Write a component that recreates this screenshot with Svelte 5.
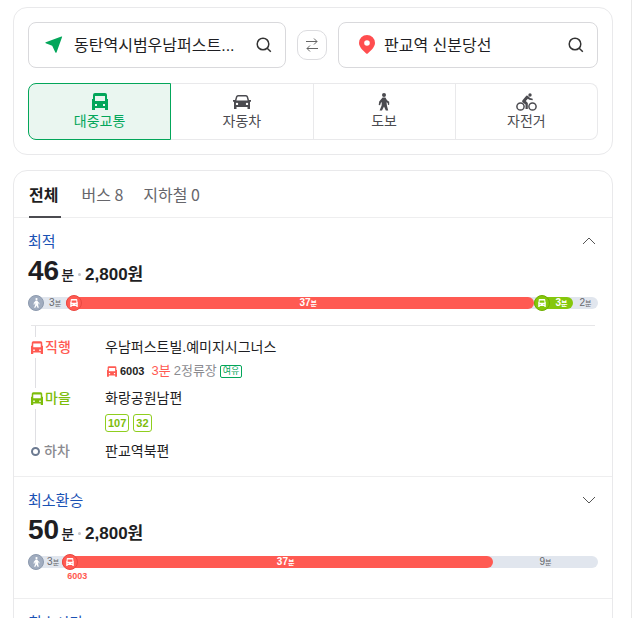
<script>
  let from = $state("동탄역시범우남퍼스트...");
  let to = $state("판교역 신분당선");
  let mode = $state("transit");
  let tab = $state("전체");
  let opened = $state(0);

  const modes = [
    { id: "transit", name: "대중교통" },
    { id: "car", name: "자동차" },
    { id: "walk", name: "도보" },
    { id: "bike", name: "자전거" },
  ];

  const tabs = [
    { name: "전체" },
    { name: "버스", count: 8 },
    { name: "지하철", count: 0 },
  ];

  // share is the part of the bar's width, in percent
  const routes = [
    {
      title: "최적",
      time: 46,
      price: "2,800",
      parts: [
        { kind: "walk", min: 3, share: 6.7, icon: true },
        { kind: "red", min: 37, share: 82.1, icon: true },
        { kind: "green", min: 3, share: 6.8, icon: true },
        { kind: "walk", min: 2, share: 4.4 },
      ],
      steps: [
        {
          kind: "red",
          label: "직행",
          stop: "우남퍼스트빌.예미지시그너스",
          bus: { no: "6003", wait: "3분", left: "2정류장", state: "여유" },
        },
        { kind: "green", label: "마을", stop: "화랑공원남편", lines: [107, 32] },
        { kind: "end", label: "하차", stop: "판교역북편" },
      ],
    },
    {
      title: "최소환승",
      time: 50,
      price: "2,800",
      parts: [
        { kind: "walk", min: 3, share: 6, icon: true },
        { kind: "red", min: 37, share: 75.6, icon: true, no: "6003" },
        { kind: "walk", min: 9, share: 18.4 },
      ],
    },
    {
      title: "최소시간",
      time: 46,
      price: "2,800",
      parts: [
        { kind: "walk", min: 3, share: 6.7, icon: true },
        { kind: "red", min: 37, share: 82.1, icon: true },
        { kind: "walk", min: 6, share: 11.2 },
      ],
    },
  ];
</script>

{#snippet busIcon()}
  <svg class="icon-bus" viewBox="0 0 16 17" aria-hidden="true">
    <path
      fill="currentColor"
      fill-rule="evenodd"
      d="M3 0h10q2 0 2 2v4h1v11h-3v-2H3v2H0V6h1V2q0-2 2-2zM3 3v5h10V3zM3 11v2h2v-2zM11 11v2h2v-2z"
    />
  </svg>
{/snippet}

{#snippet walkIcon()}
  <svg class="icon-walk" viewBox="0 0 12 18" aria-hidden="true">
    <circle cx="6" cy="2" r="2" fill="currentColor" />
    <path
      fill="currentColor"
      d="M4.6 4.5h2.8L9 7.2l2.2 1.6v3l-1.2.1-.3-2-1.2-.7.4 3.2 1.3 5.2H7.8L6 13.4 4 17.6H1.6l2-5.1.2-3.6-1 1-.7 2.4-1.4-.2.5-3.6z"
    />
  </svg>
{/snippet}

{#snippet searchIcon()}
  <svg width="16" height="16" viewBox="0 0 16 16" fill="none" stroke="#333" stroke-width="1.5" aria-hidden="true">
    <circle cx="7" cy="7" r="5.8" />
    <path d="M11.2 11.2l3.6 3.6" />
  </svg>
{/snippet}

<main class="panel">
  <section class="card search">
    <div class="places">
      <div class="field">
        <svg width="18" height="18" viewBox="0 0 18 18" aria-hidden="true">
          <path fill="#03a65a" d="M17 1.3q.5-1-.6-.8L.8 6.3q-.9.5 0 1l6.4 2.5 3.2 6.6q.6.9 1.1 0z" />
        </svg>
        <input bind:value={from} aria-label="출발지" />
        <button class="find" aria-label="출발지 검색">{@render searchIcon()}</button>
      </div>
      <button class="swap" aria-label="출발지와 도착지 바꾸기">
        <svg width="12" height="14" viewBox="0 0 12 14" fill="none" stroke="#666" aria-hidden="true">
          <path d="M0 3.5h11M8 .5l3 3-3 3M12 10.500H1M4 7.500l-3 3 3 3" />
        </svg>
      </button>
      <div class="field">
        <svg width="18" height="20" viewBox="-1 0 18 20" aria-hidden="true">
          <path
            fill="#ff4d4f"
            fill-rule="evenodd"
            d="M9 0a8 8 0 0 1 8 8C17 12.500 11.500 17 9 19 6.500 17 1 12.500 1 8A8 8 0 0 1 9 0zM9 5.200a2.800 2.800 0 1 0 0 5.600 2.800 2.800 0 0 0 0-5.600z"
          />
        </svg>
        <input bind:value={to} aria-label="도착지" />
        <button class="find" aria-label="도착지 검색">{@render searchIcon()}</button>
      </div>
    </div>

    <div class="modes">
      {#each modes as m}
        <button class="mode" class:on={mode === m.id} onclick={() => (mode = m.id)}>
          <span class="mode-icon">
            {#if m.id === "transit"}
              {@render busIcon()}
            {:else if m.id === "car"}
              <svg width="18" height="16" viewBox="0 0 18 16" aria-hidden="true">
                <path
                  fill="currentColor"
                  fill-rule="evenodd"
                  d="M5 1h8q1.500 0 2 1.500L16 6h2v1.500l-1 .5v7h-2.500v-2h-11v2H1V8L0 7.500V6h2l1-3.500Q3.500 1 5 1zM5.300 2.400q-.8 0-1 .8L3.400 6.500h11.200l-.9-3.300q-.2-.8-1-.8zM4 8.700a1.200 1.200 0 1 0 0 2.400 1.200 1.200 0 0 0 0-2.400zM14 8.700a1.200 1.200 0 1 0 0 2.400 1.200 1.200 0 0 0 0-2.400z"
                />
              </svg>
            {:else if m.id === "walk"}
              {@render walkIcon()}
            {:else}
              <svg width="21" height="18" viewBox="0 0 21 18" aria-hidden="true">
                <g fill="none" stroke="currentColor" stroke-width="1.500">
                  <circle cx="4.500" cy="13.500" r="3.600" />
                  <circle cx="16.500" cy="13.500" r="3.600" />
                </g>
                <circle cx="14" cy="2" r="1.700" fill="currentColor" />
                <path
                  fill="currentColor"
                  d="M10.300 2.700q1-.4 1.700.4l2 2 2.700.6v1.500l-3.400-.4-1.500-1-2 2.200 2 2V16H9.500v-4.500L6.500 9.300Q5.600 8.300 6.500 7.200z"
                />
              </svg>
            {/if}
          </span>
          {m.name}
        </button>
      {/each}
    </div>
  </section>

  <section class="card results">
    <nav class="tabs">
      {#each tabs as t}
        <button class="tab" class:on={tab === t.name} onclick={() => (tab = t.name)}>
          {t.name}
          {t.count}
        </button>
      {/each}
    </nav>

    {#each routes as route, i}
      <article class="route">
        <div class="top">
          <h2>{route.title}</h2>
          <button
            class="toggle"
            class:open={opened === i}
            aria-label="상세 경로"
            onclick={() => (opened = opened === i ? -1 : i)}
          >
            <svg width="14" height="8" viewBox="0 0 14 8" fill="none" stroke="#555" aria-hidden="true">
              <path d="M1 1l6 6 6-6" />
            </svg>
          </button>
        </div>
        <div class="sum">
          <strong>{route.time}</strong>
          <span class="unit">분</span>
          <span class="dot"></span>
          <span class="price">{route.price}원</span>
        </div>

        <div class="bar">
          {#each route.parts as part}
            <div class="part {part.kind}" style="width: {part.share}%">
              {#if part.icon}
                <span class="round">
                  {#if part.kind === "walk"}
                    {@render walkIcon()}
                  {:else}
                    {@render busIcon()}
                  {/if}
                </span>
              {/if}
              <span class="min">{part.min}<small>분</small></span>
              {#if part.no}
                <span class="no">{part.no}</span>
              {/if}
            </div>
          {/each}
        </div>

        {#if opened === i && route.steps}
          <ol class="steps">
            {#each route.steps as step}
              <li class="step {step.kind}">
                <div class="label">
                  {#if step.kind === "end"}
                    <span class="ring"></span>
                  {:else}
                    <span class="label-icon">{@render busIcon()}</span>
                  {/if}
                  {step.label}
                </div>
                <div class="info">
                  <div class="stop">{step.stop}</div>
                  {#if step.bus}
                    <div class="bus">
                      {@render busIcon()}
                      <b>{step.bus.no}</b>
                      <span class="wait">{step.bus.wait}</span>
                      <span class="left">{step.bus.left}</span>
                      <span class="state">{step.bus.state}</span>
                    </div>
                  {/if}
                  {#if step.lines}
                    <div class="lines">
                      {#each step.lines as line}
                        <span class="line">{line}</span>
                      {/each}
                    </div>
                  {/if}
                </div>
              </li>
            {/each}
          </ol>
        {/if}
      </article>
    {/each}
  </section>
</main>

<style>
  :global(body) {
    background: #fff;
  }
  .panel {
    box-sizing: border-box;
    height: 100vh;
    overflow: hidden;
    margin-right: 7px;
    padding: 7px 18px 0 13px;
    border-right: 1px solid #e8e8e8;
    font-family: "Liberation Sans", "Noto Sans CJK KR", sans-serif;
    color: #1e1e23;
  }
  button,
  input {
    font: inherit;
    color: inherit;
    padding: 0;
    border: 0;
    background: none;
  }
  button {
    cursor: pointer;
  }
  svg {
    display: block;
    flex: none;
  }
  .card {
    border: 1px solid #e9e9eb;
    border-radius: 14px;
  }
  .search {
    padding: 14px;
    margin-bottom: 15px;
  }

  .places {
    display: flex;
    align-items: center;
    gap: 11px;
    margin-bottom: 15px;
  }
  .field {
    box-sizing: border-box;
    flex: 1;
    min-width: 0;
    height: 46px;
    display: flex;
    align-items: center;
    padding: 0 13px 0 16px;
    border: 1px solid #d9d9dc;
    border-radius: 8px;
  }
  .field input {
    flex: 1;
    min-width: 0;
    height: 24px;
    margin: 0 10px 0 11px;
    padding-bottom: 2px;
    font-size: 16px;
    outline: none;
  }
  .field + .swap + .field {
    padding-left: 18px;
  }
  .field + .swap + .field input {
    margin-left: 9px;
  }
  .swap {
    width: 30px;
    height: 30px;
    display: flex;
    align-items: center;
    justify-content: center;
    border: 1px solid #dcdcdf;
    border-radius: 10px;
  }

  .modes {
    display: flex;
  }
  .mode {
    box-sizing: border-box;
    flex: 1;
    height: 57px;
    display: flex;
    flex-direction: column;
    align-items: center;
    padding-top: 8px;
    border: 1px solid #e9e9eb;
    border-left-width: 0;
    font-size: 14px;
    line-height: 20px;
    color: #4b4b50;
  }
  .mode:first-child {
    border-left-width: 1px;
    border-radius: 8px 0 0 8px;
  }
  .mode:last-child {
    border-radius: 0 8px 8px 0;
  }
  .mode.on {
    border: 1px solid #03a65a;
    background: #eaf6f0;
    color: #03a65a;
  }
  .mode-icon {
    height: 19px;
    display: flex;
    align-items: center;
  }
  .icon-bus {
    width: 16px;
    height: 17px;
  }
  .icon-walk {
    width: 12px;
    height: 18px;
  }

  .tabs {
    display: flex;
    gap: 20px;
    height: 46px;
    padding: 0 15px;
    border-bottom: 1px solid #eeeeef;
  }
  .tab {
    height: 47px;
    border-bottom: 2px solid transparent;
    font-family: "Noto Sans CJK KR", sans-serif;
    font-size: 16px;
    color: #66666b;
  }
  .tab.on {
    padding-right: 3px;
    border-color: #4b4b50;
    font-weight: 700;
    color: #1e1e23;
  }

  .route {
    padding: 14px 14px 15px;
    border-bottom: 1px solid #eeeeef;
  }
  .top {
    display: flex;
    justify-content: space-between;
    align-items: center;
  }
  h2 {
    margin: 0;
    font-size: 15px;
    font-weight: 400;
    line-height: 20px;
    color: #1b52b4;
  }
  .toggle {
    padding: 1px 2px 3px;
  }
  .toggle.open svg {
    transform: rotate(180deg);
  }
  .sum {
    display: flex;
    align-items: baseline;
    height: 34px;
    margin: 2px 0 9px;
    line-height: 34px;
  }
  .sum strong {
    font-size: 28px;
  }
  .unit {
    margin-left: 2px;
    font-size: 14px;
    font-weight: 500;
  }
  .dot {
    width: 3px;
    height: 3px;
    margin: 0 4px;
    border-radius: 50%;
    background: #c4c4c8;
    align-self: center;
    position: relative;
    top: 3px;
  }
  .price {
    font-size: 17px;
    font-weight: 700;
  }

  .bar {
    display: flex;
    height: 12px;
    margin: 2px 0;
    border-radius: 6px;
    background: #e1e6ee;
  }
  .part {
    position: relative;
    display: flex;
    align-items: center;
    border-radius: 6px;
    color: #66666b;
  }
  .part.red {
    background: #ff5a52;
    color: #fff;
  }
  .part.green {
    background: #85c70c;
    color: #fff;
  }
  .round {
    box-sizing: border-box;
    flex: none;
    width: 16px;
    height: 16px;
    display: flex;
    align-items: center;
    justify-content: center;
    border: 1px solid #8d9aae;
    border-radius: 50%;
    background: #a0acbf;
    color: #fff;
  }
  .red .round {
    border-color: #ea4841;
    background: #ff5a52;
  }
  .green .round {
    border-color: #6fae00;
    background: #85c70c;
  }
  .round .icon-bus {
    width: 8px;
    height: 8px;
  }
  .round .icon-walk {
    width: 7px;
    height: 10px;
  }
  .min {
    flex: 1;
    text-align: center;
    font-size: 10px;
    line-height: 12px;
  }
  .min small {
    font-size: 7px;
  }
  .red .min,
  .green .min {
    font-weight: 700;
  }
  .no {
    position: absolute;
    top: 14px;
    left: 5px;
    font-size: 9px;
    line-height: 12px;
    font-weight: 700;
    color: #ff5a52;
  }
  .route:has(.no) {
    padding-bottom: 28px;
  }

  .steps {
    position: relative;
    list-style: none;
    display: flex;
    flex-direction: column;
    margin: 16px 3px 0;
    padding: 11px 0 0;
    border-top: 1px solid #e6e6e8;
  }
  .steps::before {
    content: "";
    position: absolute;
    top: 0;
    bottom: 16px;
    left: 4px;
    width: 1px;
    background: #dfdfe3;
  }
  .step {
    position: relative;
    display: flex;
    font-size: 14px;
    line-height: 20px;
  }
  .step + .step {
    margin-top: 7px;
  }
  .label {
    flex: none;
    width: 74px;
    height: 20px;
    display: flex;
    align-items: center;
    gap: 2px;
    font-weight: 500;
  }
  .label-icon {
    padding: 4px 0;
    background: #fff;
  }
  .label-icon .icon-bus {
    width: 12px;
    height: 13px;
  }
  .red .label,
  .bus {
    color: #ff5a52;
  }
  .green .label {
    color: #7dbd0b;
  }
  .end .label {
    gap: 4px;
    color: #8b8b90;
  }
  .ring {
    box-sizing: border-box;
    width: 9px;
    height: 9px;
    border: 2px solid #6c7a91;
    border-radius: 50%;
    background: #fff;
  }
  .bus {
    display: flex;
    align-items: center;
    margin-top: 4px;
    padding-left: 2px;
    font-size: 13px;
  }
  .bus .icon-bus {
    width: 10px;
    height: 11px;
  }
  .bus b {
    margin: 0 7px 0 3px;
    font-size: 11px;
    color: #1e1e23;
  }
  .left {
    margin: 0 3px;
    color: #8b8b90;
  }
  .state {
    padding: 0 2px;
    border: 1px solid #03a65a;
    border-radius: 2px;
    font-size: 9px;
    line-height: 11px;
    color: #03a65a;
  }
  .lines {
    display: flex;
    gap: 4px;
    margin: 6px 0 2px;
  }
  .line {
    padding: 0 2px;
    border: 1px solid #8fce1f;
    border-radius: 3px;
    font-size: 11px;
    line-height: 16px;
    font-weight: 700;
    color: #7dbd0b;
  }
</style>
